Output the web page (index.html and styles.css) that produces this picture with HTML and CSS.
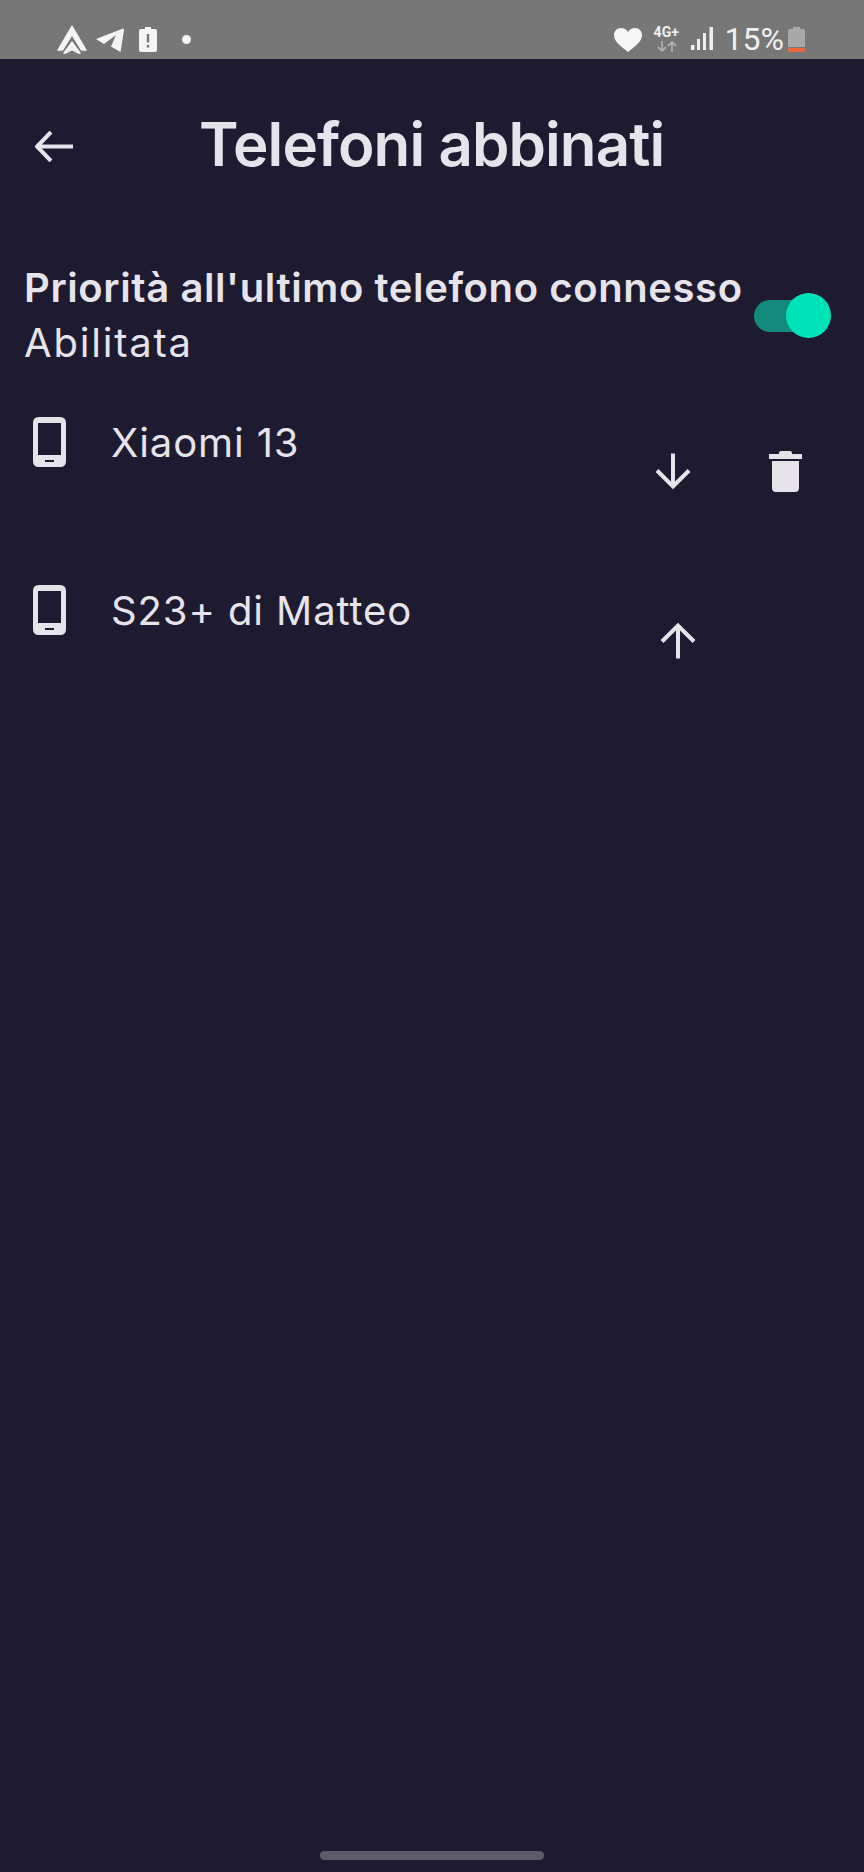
FILE: index.html
```html
<!DOCTYPE html>
<html lang="it">
<head>
    <meta charset="UTF-8">
    <meta name="viewport" content="width=device-width, initial-scale=1.0">
    <title>Telefoni abbinati</title>
    <link rel="stylesheet" href="styles.css">
</head>
<body>

<!-- Status bar -->
<div class="statusbar">
    <div class="status-left">
        <svg class="ic-auto" viewBox="0 0 30 30"><path d="M15 0 L29.500 24.500 Q30 26 28 26 L24 25.500 L15 11 L6 25.500 L2 26 Q0 26 0.500 24.500 Z M15 16 L23.500 27.500 Q24 29.500 22 29 L15 25.500 L8 29 Q6 29.500 6.500 27.500 Z" fill="#f4f4f4"/></svg>
        <svg class="ic-telegram" viewBox="0 0 28 24"><path d="M0 11 L27 0.500 Q28 0.500 28 2 L24.500 24 L15 18.500 L20 7 L8 16 Z" fill="#f4f4f4"/></svg>
        <svg class="ic-alert" viewBox="0 0 18 25"><path fill-rule="evenodd" d="M6 0 H12 V2 H16 Q18 2 18 4 V23 Q18 25 16 25 H2 Q0 25 0 23 V4 Q0 2 2 2 H6 Z M7.800 7 V15.500 H10.200 V7 Z M7.800 18 V20.500 H10.200 V18 Z" fill="#f4f4f4"/></svg>
        <span class="dot"></span>
    </div>
    <div class="status-right">
        <svg class="ic-heart" viewBox="0 0 28 24"><path d="M14 24 C8 19 0 14 0 7 C0 3 3 0 7 0 C10 0 12.500 1.500 14 4 C15.500 1.500 18 0 21 0 C25 0 28 3 28 7 C28 14 20 19 14 24 Z" fill="#f6f6f6"/></svg>
        <div class="net">
            <span class="net-label">4G+</span>
            <svg class="ic-updown" viewBox="0 0 20 11"><path d="M5 0 V10 M1 6 L5 10 L9 6 M15 11 V1 M11 5 L15 1 L19 5" fill="none" stroke="#aeaeae" stroke-width="1.800"/></svg>
        </div>
        <svg class="ic-signal" viewBox="0 0 22 23"><rect x="0" y="18" width="3.500" height="5" fill="#f0f0f0"/><rect x="6" y="12" width="3" height="11" fill="#f0f0f0"/><rect x="12" y="6" width="3" height="17" fill="#f0f0f0"/><rect x="18.500" y="0" width="3.500" height="23" fill="#f0f0f0"/></svg>
        <span class="percent">15%</span>
        <svg class="ic-battery" viewBox="0 0 17 25"><path d="M5 0 H12 V2 H15 Q17 2 17 4 V20 H0 V4 Q0 2 2 2 H5 Z" fill="#a8a8a8"/><path d="M0 21 H17 V23 Q17 25 15 25 H2 Q0 25 0 23 Z" fill="#e8693f"/></svg>
    </div>
</div>

<!-- Title -->
<header class="topbar">
    <svg class="ic-back" viewBox="0 0 38 31"><path d="M38 15.500 H3 M16 1 L2 15.500 L16 30" fill="none" stroke="#e6e4ea" stroke-width="4"/></svg>
    <h1>Telefoni abbinati</h1>
</header>

<!-- Priority setting -->
<div class="setting">
    <div class="setting-text">
        <p class="setting-title">Priorità all'ultimo telefono connesso</p>
        <p class="setting-value">Abilitata</p>
    </div>
    <div class="toggle"><span class="knob"></span></div>
</div>

<!-- Paired phones -->
<div class="phone-row first">
    <svg class="ic-phone" viewBox="0 0 33 50"><path fill-rule="evenodd" d="M6 0 H27 Q33 0 33 6 V44 Q33 50 27 50 H6 Q0 50 0 44 V6 Q0 0 6 0 Z M5 6 V38 H28 V6 Z M12 43 V45 H21 V43 Z" fill="#e6e4ea"/></svg>
    <span class="phone-name">Xiaomi 13</span>
    <div class="phone-actions">
        <svg class="ic-arrow" viewBox="0 0 36 36"><path d="M18 0 V33 M2 17 L18 33 L34 17" fill="none" stroke="#e6e4ea" stroke-width="4"/></svg>
        <svg class="ic-trash" viewBox="0 0 33 41"><path d="M10 2 Q10 0 12 0 H21 Q23 0 23 2 V3 H33 V8 H0 V3 H10 Z M3 10 H30 V37 Q30 41 26 41 H7 Q3 41 3 37 Z" fill="#e6e4ea"/></svg>
    </div>
</div>

<div class="phone-row second">
    <svg class="ic-phone" viewBox="0 0 33 50"><path fill-rule="evenodd" d="M6 0 H27 Q33 0 33 6 V44 Q33 50 27 50 H6 Q0 50 0 44 V6 Q0 0 6 0 Z M5 6 V38 H28 V6 Z M12 43 V45 H21 V43 Z" fill="#e6e4ea"/></svg>
    <span class="phone-name">S23+ di Matteo</span>
    <div class="phone-actions">
        <svg class="ic-arrow" viewBox="0 0 36 36"><path d="M18 36 V3 M2 19 L18 3 L34 19" fill="none" stroke="#e6e4ea" stroke-width="4"/></svg>
    </div>
</div>

<div class="home-bar"></div>

</body>
</html>
```

FILE: styles.css
```css
/* General Body Styling */
body {
    font-family: Inter, 'Noto Sans', sans-serif;
    margin: 0;
    padding: 0;
    height: 1872px;
    background: #1e1b30;
    color: #e6e4ea;
    display: flex;
    flex-direction: column;
    overflow: hidden;
}

svg {
    display: block;
    flex-shrink: 0;
}

p, h1 {
    margin: 0;
}

/* Status bar */
.statusbar {
    height: 59px;
    background: #777777;
    display: flex;
    justify-content: space-between;
    align-items: flex-start;
    padding: 25px 59px 0 57px;
    box-sizing: border-box;
}

.status-left, .status-right {
    display: flex;
    align-items: flex-start;
}

.ic-auto {
    width: 30px;
    height: 30px;
}

.ic-telegram {
    width: 28px;
    height: 24px;
    margin: 3px 0 0 9px;
}

.ic-alert {
    width: 18px;
    height: 25px;
    margin: 2px 0 0 15px;
}

.dot {
    width: 9px;
    height: 9px;
    margin: 10px 0 0 25px;
    border-radius: 50%;
    background: #f4f4f4;
}

.ic-heart {
    width: 28px;
    height: 24px;
    margin-top: 3px;
}

.net {
    width: 28px;
    margin: 1px 0 0 12px;
}

.net-label {
    display: block;
    font-family: Roboto, sans-serif;
    font-size: 14px;
    font-weight: 700;
    line-height: 13px;
    color: #f0f0f0;
}

.ic-updown {
    width: 20px;
    height: 11px;
    margin: 2px 0 0 3px;
}

.ic-signal {
    width: 22px;
    height: 23px;
    margin: 2px 0 0 9px;
}

.percent {
    font-family: Roboto, sans-serif;
    font-size: 32px;
    line-height: 28px;
    color: #f0f0f0;
    margin-left: 12px;
}

.ic-battery {
    width: 17px;
    height: 25px;
    margin: 2px 0 0 4px;
}

/* Title */
.topbar {
    display: flex;
    align-items: flex-start;
    padding: 72px 0 0 35px;
}

.ic-back {
    width: 38px;
    height: 31px;
}

.topbar h1 {
    font-size: 60px;
    font-weight: 600;
    line-height: 70px;
    letter-spacing: -0.9px;
    margin: -22px 0 0 126px;
}

/* Priority setting */
.setting {
    display: flex;
    justify-content: space-between;
    align-items: flex-start;
    padding: 81px 48px 0 24px;
}

.setting-title, .setting-value {
    font-size: 40px;
    line-height: 54px;
}

.setting-title {
    font-weight: 600;
    line-height: 56px;
    letter-spacing: 0.6px;
}

.setting-value {
    letter-spacing: 1.8px;
}

.toggle {
    width: 62px;
    height: 32px;
    margin-top: 40px;
    border-radius: 16px;
    background: #138a7c;
    position: relative;
}

.knob {
    position: absolute;
    top: -7px;
    right: -15px;
    width: 45px;
    height: 45px;
    border-radius: 50%;
    background: #00e3b8;
}

/* Paired phones */
.phone-row {
    display: flex;
    align-items: flex-start;
    padding-left: 33px;
}

.phone-row.first {
    margin-top: 47px;
    height: 168px;
    padding-right: 62px;
}

.phone-row.second {
    padding-right: 168px;
}

.ic-phone {
    width: 33px;
    height: 50px;
}

.phone-name {
    font-size: 40px;
    line-height: 46px;
    margin: 3px 0 0 45px;
    letter-spacing: 0.9px;
}

.phone-actions {
    margin-left: auto;
    display: flex;
    align-items: flex-start;
}

.first .phone-actions {
    margin-top: 34px;
}

.second .phone-actions {
    margin-top: 37px;
}

.ic-arrow {
    width: 36px;
    height: 37px;
}

.first .ic-arrow {
    margin-top: 2px;
}

.ic-trash {
    width: 33px;
    height: 41px;
    margin-left: 78px;
}

/* Home indicator */
.home-bar {
    align-self: center;
    margin-top: auto;
    margin-bottom: 12px;
    width: 224px;
    height: 9px;
    border-radius: 5px;
    background: #5e5a6a;
}
```
